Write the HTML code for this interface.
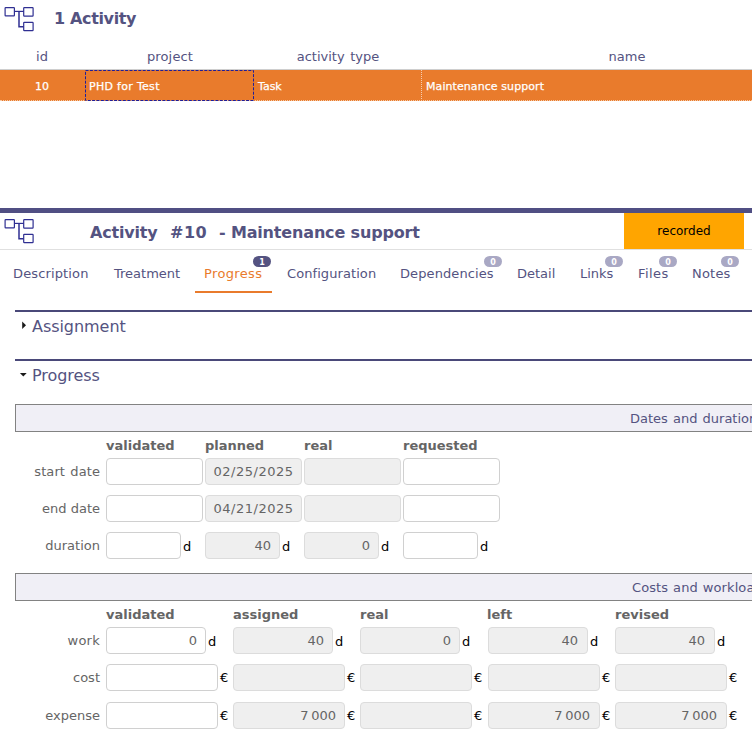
<!DOCTYPE html>
<html lang="en">
<head>
<meta charset="utf-8">
<title>Activity #10 - Maintenance support</title>
<style>
*{box-sizing:border-box;margin:0;padding:0}
html,body{width:752px;height:738px;overflow:hidden;background:#fff}
body{position:relative;font-family:"DejaVu Sans","Liberation Sans",sans-serif;font-size:13px;color:#555;}
.abs{position:absolute;white-space:nowrap}
.ink{color:#545381}
/* list */
#listTitle{left:54px;top:9px;font-size:16px;letter-spacing:-0.35px;font-weight:bold;color:#545381;line-height:20px}
.hdr{top:48px;font-size:13px;line-height:18px;color:#545381;text-align:center}
#hline{left:0;top:69px;width:752px;height:1px;background:#cecece}
#row{left:0;top:70px;width:752px;height:31px;background:#e97b2c;border-bottom:1px dotted #f6c9a6}
.cell{top:72px;height:30px;line-height:30px;font-size:11px;color:#fff;-webkit-text-stroke:0.25px #fff}
/* detail header */
#bar{left:0;top:208px;width:752px;height:5px;background:#504f83}
.dtitle{top:222px;font-size:16px;font-weight:bold;color:#545381;line-height:22px}
#status{left:624px;top:213px;width:120px;height:36px;background:#ffa500;color:#000;font-size:12px;line-height:36px;text-align:center}
#hline2{left:0;top:249px;width:752px;height:1px;background:#e0e0e0}
/* tabs */
.tab{top:265px;font-size:13px;line-height:18px;color:#545381}
.tab.sel{color:#e97b2c}
#tabul{left:195px;top:290.5px;width:77px;height:2px;background:#e97b2c}
.badge{height:11px;border-radius:5.5px;background:#a9a8c4;color:#fff;font-size:8px;font-weight:bold;line-height:13px;text-align:center;width:18px;top:256px}
.badge.on{background:#545381}
/* sections */
.secline{left:15px;width:737px;height:2px;background:#4a4979}
.sectitle{left:32px;margin-top:1px;letter-spacing:-0.05px;font-size:16px;line-height:22px;color:#545381}
.tri{width:0;height:0}
.grp{left:15px;width:760px;height:28px;background:#f0eff6;border:1px solid #828282;color:#545381;font-size:13px;line-height:26px}
.colh{margin-top:1px;font-size:13px;font-weight:bold;color:#656565;line-height:18px}
.lbl{margin-top:1px;font-size:13px;color:#656565;line-height:18px;text-align:right;width:100px;left:0}
.inp{height:27px;border:1px solid #d0d0d0;border-radius:4px;background:#fff;font-size:13px;color:#656565;line-height:25px;text-align:right;padding-right:8px}
.inp.ro{background:#efefef;border-color:#dcdcdc}
.inp.p9{padding-right:9px}
.inp.c{text-align:center;padding-right:0;letter-spacing:0.5px}
.unit{font-size:13px;color:#000;line-height:18px}
</style>
</head>
<body>

<!-- LIST ICON -->
<svg class="abs" style="left:0;top:0px" width="40" height="36" viewBox="0 0 40 36" fill="none" stroke="#2f2f92" stroke-width="1.2">
<rect x="5.1" y="7.6" width="9.3" height="8.2" rx="0.6"/>
<rect x="23.7" y="7.7" width="9.4" height="8.5" rx="0.6"/>
<rect x="23.7" y="22.3" width="9.4" height="8.3" rx="0.6"/>
<path d="M14.4 11.4H23.7" stroke-width="1.2"/><path d="M19 11.4V26.8H23.7" stroke-width="1.5"/>
</svg>
<div class="abs" id="listTitle">1 Activity</div>

<div class="abs hdr" style="left:0;width:84px">id</div>
<div class="abs hdr" style="left:85px;width:170px;letter-spacing:0.15px">project</div>
<div class="abs hdr" style="left:253px;width:170px;word-spacing:1.5px">activity type</div>
<div class="abs hdr" style="left:421px;width:412px">name</div>
<div class="abs" id="hline"></div>
<div class="abs" id="row"></div>
<div class="abs cell" style="left:0;width:84px;text-align:center">10</div>
<svg class="abs" style="left:85px;top:70px" width="169" height="31" viewBox="0 0 169 31"><rect x="0.5" y="0.5" width="168" height="30" fill="none" stroke="#1e1e9a" stroke-width="1" stroke-dasharray="3 1.4"/></svg>
<div class="abs cell" style="left:89px;letter-spacing:0.3px">PHD for Test</div>
<div class="abs cell" style="left:258px">Task</div>
<div class="abs" style="left:421px;top:70px;width:0;height:31px;border-left:1px dotted #f6cdb0"></div>
<div class="abs cell" style="left:426px;letter-spacing:0.08px">Maintenance support</div>

<!-- DETAIL -->
<div class="abs" id="bar"></div>
<svg class="abs" style="left:0;top:212px" width="40" height="36" viewBox="0 0 40 36" fill="none" stroke="#2f2f92" stroke-width="1.2">
<rect x="5.1" y="7.6" width="9.3" height="8.2" rx="0.6"/>
<rect x="23.7" y="7.7" width="9.4" height="8.5" rx="0.6"/>
<rect x="23.7" y="22.3" width="9.4" height="8.3" rx="0.6"/>
<path d="M14.4 11.4H23.7" stroke-width="1.2"/><path d="M19 11.4V26.8H23.7" stroke-width="1.5"/>
</svg>
<div class="abs dtitle" style="left:90px;letter-spacing:-0.2px">Activity</div>
<div class="abs dtitle" style="left:170px;letter-spacing:0.5px">#10</div>
<div class="abs dtitle" style="left:219px;letter-spacing:-0.16px">- Maintenance support</div>
<div class="abs" id="status">recorded</div>
<div class="abs" id="hline2"></div>

<div class="abs tab" style="left:13px;letter-spacing:0.14px">Description</div>
<div class="abs tab" style="left:114px">Treatment</div>
<div class="abs tab sel" style="left:204px;letter-spacing:0.36px">Progress</div>
<div class="abs tab" style="left:287px;letter-spacing:0.08px">Configuration</div>
<div class="abs tab" style="left:400px;letter-spacing:0.1px">Dependencies</div>
<div class="abs tab" style="left:517px">Detail</div>
<div class="abs tab" style="left:580px">Links</div>
<div class="abs tab" style="left:638px;letter-spacing:0.45px">Files</div>
<div class="abs tab" style="left:692px;letter-spacing:0.2px">Notes</div>
<div class="abs" id="tabul"></div>
<div class="abs badge on" style="left:253px">1</div>
<div class="abs badge" style="left:484px">0</div>
<div class="abs badge" style="left:605px">0</div>
<div class="abs badge" style="left:659px">0</div>
<div class="abs badge" style="left:721px">0</div>

<!-- SECTIONS -->
<div class="abs secline" style="top:310px"></div>
<svg class="abs" style="left:20px;top:318px" width="10" height="14" viewBox="0 0 10 14"><path d="M2.2 3.6V11L6 7.3Z" fill="#1a1a1a"/></svg>
<div class="abs sectitle" style="top:315px">Assignment</div>
<div class="abs secline" style="top:359px"></div>
<svg class="abs" style="left:18px;top:370px" width="12" height="10" viewBox="0 0 12 10"><path d="M1.9 3H8.7L5.3 6.5Z" fill="#1a1a1a"/></svg>
<div class="abs sectitle" style="top:364px">Progress</div>

<div class="abs grp" style="top:404px"><span class="abs" style="left:614px;top:1px;word-spacing:1px">Dates and duration</span></div>

<div class="abs colh" style="left:106px;top:436px">validated</div>
<div class="abs colh" style="left:205px;top:436px">planned</div>
<div class="abs colh" style="left:304px;top:436px">real</div>
<div class="abs colh" style="left:403px;top:436px">requested</div>

<div class="abs lbl" style="top:462px;letter-spacing:0.1px;word-spacing:1px">start date</div>
<div class="abs inp" style="left:106px;top:458px;width:97px"></div>
<div class="abs inp ro c" style="left:205px;top:458px;width:97px">02/25/2025</div>
<div class="abs inp ro" style="left:304px;top:458px;width:97px"></div>
<div class="abs inp" style="left:403px;top:458px;width:97px"></div>

<div class="abs lbl" style="top:499px">end date</div>
<div class="abs inp" style="left:106px;top:495px;width:97px"></div>
<div class="abs inp ro c" style="left:205px;top:495px;width:97px">04/21/2025</div>
<div class="abs inp ro" style="left:304px;top:495px;width:97px"></div>
<div class="abs inp" style="left:403px;top:495px;width:97px"></div>

<div class="abs lbl" style="top:536px">duration</div>
<div class="abs inp" style="left:106px;top:532px;width:75px"></div><div class="abs unit" style="left:183px;top:538px">d</div>
<div class="abs inp ro" style="left:205px;top:532px;width:75px">40</div><div class="abs unit" style="left:282px;top:538px">d</div>
<div class="abs inp ro" style="left:304px;top:532px;width:75px">0</div><div class="abs unit" style="left:381px;top:538px">d</div>
<div class="abs inp" style="left:403px;top:532px;width:75px"></div><div class="abs unit" style="left:480px;top:538px">d</div>

<div class="abs grp" style="top:573px"><span class="abs" style="left:616px;top:1px;letter-spacing:0.1px;word-spacing:0.7px">Costs and workload</span></div>

<div class="abs colh" style="left:106px;top:605px">validated</div>
<div class="abs colh" style="left:233px;top:605px">assigned</div>
<div class="abs colh" style="left:360px;top:605px">real</div>
<div class="abs colh" style="left:487px;top:605px">left</div>
<div class="abs colh" style="left:615px;top:605px">revised</div>

<div class="abs lbl" style="top:631px;letter-spacing:0.25px">work</div>
<div class="abs inp" style="left:106px;top:627px;width:100px">0</div><div class="abs unit" style="left:208px;top:633px">d</div>
<div class="abs inp ro" style="left:233px;top:627px;width:100px">40</div><div class="abs unit" style="left:335px;top:633px">d</div>
<div class="abs inp ro" style="left:360px;top:627px;width:100px">0</div><div class="abs unit" style="left:462px;top:633px">d</div>
<div class="abs inp ro p9" style="left:488px;top:627px;width:100px">40</div><div class="abs unit" style="left:590px;top:633px">d</div>
<div class="abs inp ro p9" style="left:615px;top:627px;width:100px">40</div><div class="abs unit" style="left:717px;top:633px">d</div>

<div class="abs lbl" style="top:668px">cost</div>
<div class="abs inp" style="left:106px;top:664px;width:112px"></div><div class="abs unit" style="left:220px;top:669px">€</div>
<div class="abs inp ro" style="left:233px;top:664px;width:112px"></div><div class="abs unit" style="left:347px;top:669px">€</div>
<div class="abs inp ro" style="left:360px;top:664px;width:112px"></div><div class="abs unit" style="left:474px;top:669px">€</div>
<div class="abs inp ro p9" style="left:488px;top:664px;width:112px"></div><div class="abs unit" style="left:602px;top:669px">€</div>
<div class="abs inp ro p9" style="left:615px;top:664px;width:112px"></div><div class="abs unit" style="left:729px;top:669px">€</div>

<div class="abs lbl" style="top:706px">expense</div>
<div class="abs inp" style="left:106px;top:702px;width:112px"></div><div class="abs unit" style="left:220px;top:707px">€</div>
<div class="abs inp ro" style="left:233px;top:702px;width:112px">7&#8201;000</div><div class="abs unit" style="left:347px;top:707px">€</div>
<div class="abs inp ro" style="left:360px;top:702px;width:112px"></div><div class="abs unit" style="left:474px;top:707px">€</div>
<div class="abs inp ro p9" style="left:488px;top:702px;width:112px">7&#8201;000</div><div class="abs unit" style="left:602px;top:707px">€</div>
<div class="abs inp ro p9" style="left:615px;top:702px;width:112px">7&#8201;000</div><div class="abs unit" style="left:729px;top:707px">€</div>

</body>
</html>
